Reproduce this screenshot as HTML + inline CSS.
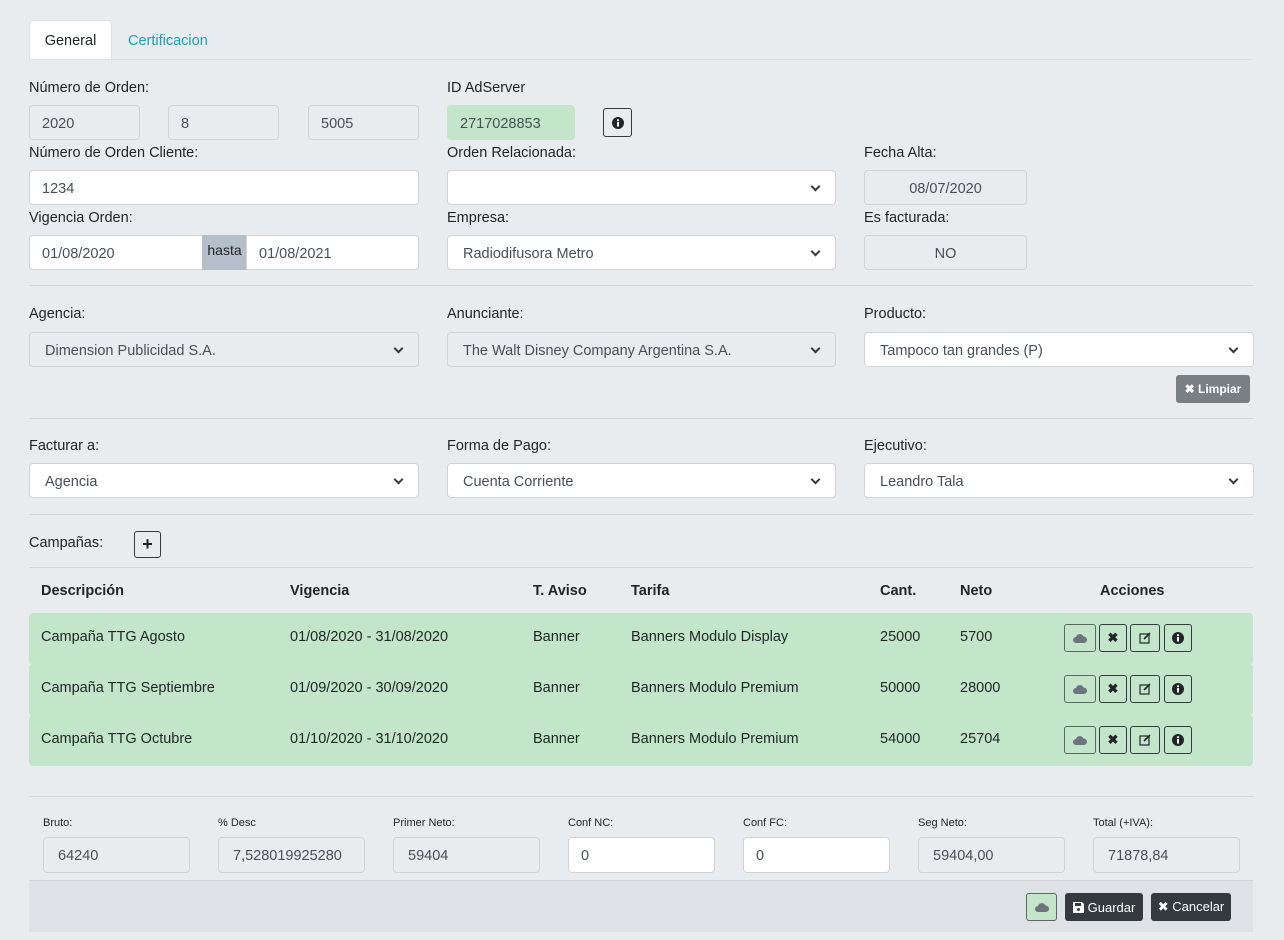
<!DOCTYPE html>
<html><head><meta charset="utf-8"><style>
*{box-sizing:border-box;margin:0;padding:0}
body{width:1284px;height:940px;background:#e9ecef;font-family:"Liberation Sans",sans-serif;color:#212529;font-size:14.5px;position:relative;overflow:hidden}
.a{position:absolute}
.lbl{position:absolute;font-size:14.5px;line-height:18px;top:0}
.in{position:absolute;height:35px;border:1px solid #ced4da;border-radius:4px;background:#fff;padding:0 12px;line-height:36px;font-size:14.5px;color:#495057}
.dis{background:#e9ecef}
.sel{padding-left:15px}
.sel::after{content:"";position:absolute;right:16px;top:12px;width:5px;height:5px;border-right:2px solid #343a40;border-bottom:2px solid #343a40;transform:rotate(45deg)}
.hr{position:absolute;left:29px;width:1224px;height:1px;background:#d3d7db}
.ib{position:absolute;width:29px;height:28px;border:1px solid #343a40;border-radius:3px;display:flex;align-items:center;justify-content:center}
.row{position:absolute;left:29px;width:1224px;height:50px;background:#c3e6cb;border-radius:4px}
.row span{position:absolute;top:16px;font-size:14.5px}
.th{position:absolute;top:583px;font-weight:bold;font-size:14.5px}
.sl{position:absolute;top:817px;font-size:11px;color:#212529}
.si{position:absolute;top:837px;width:147px;height:36px;border:1px solid #ced4da;border-radius:4px;background:#e9ecef;padding-left:14px;line-height:37px;font-size:14.5px;color:#495057}
.btn{position:absolute;height:28px;border-radius:3px;color:#fff;font-size:13px;display:flex;align-items:center;justify-content:center;gap:4px}
</style></head><body>
<div class="a" style="left:29px;top:20px;width:83px;height:40px;background:#fff;border:1px solid #dee2e6;border-bottom:none;border-radius:4px 4px 0 0;text-align:center;line-height:41px">General</div>
<div class="a" style="left:128px;top:21px;line-height:40px;color:#17a2b8">Certificacion</div>
<div class="hr" style="top:59px;background:#dee2e6"></div>

<div class="lbl" style="left:29px;top:79px">Número de Orden:</div>
<div class="lbl" style="left:447px;top:79px">ID AdServer</div>
<div class="in dis" style="left:29px;top:105px;width:111px">2020</div>
<div class="in dis" style="left:168px;top:105px;width:111px">8</div>
<div class="in dis" style="left:308px;top:105px;width:111px">5005</div>
<div class="in" style="left:447px;top:105px;width:128px;background:#c3e6cb;border-color:#c3e6cb">2717028853</div>
<div class="ib" style="left:603px;top:108px;height:29px"><svg width="12" height="12" viewBox="0 0 12 12"><circle cx="6" cy="6" r="6" fill="#212529"/><rect x="5" y="5" width="2" height="4.5" fill="#fff"/><circle cx="6" cy="3.2" r="1.1" fill="#fff"/></svg></div>

<div class="lbl" style="left:29px;top:144px">Número de Orden Cliente:</div>
<div class="lbl" style="left:447px;top:144px">Orden Relacionada:</div>
<div class="lbl" style="left:864px;top:144px">Fecha Alta:</div>
<div class="in" style="left:29px;top:170px;width:390px">1234</div>
<div class="in sel" style="left:447px;top:170px;width:389px"></div>
<div class="in dis" style="left:864px;top:170px;width:163px;text-align:center">08/07/2020</div>

<div class="lbl" style="left:29px;top:209px">Vigencia Orden:</div>
<div class="lbl" style="left:447px;top:209px">Empresa:</div>
<div class="lbl" style="left:864px;top:209px">Es facturada:</div>
<div class="in" style="left:29px;top:235px;width:174px;border-radius:4px 0 0 4px">01/08/2020</div>
<div class="a" style="left:202px;top:235px;width:45px;height:35px;background:#b4bfc9;text-align:center;line-height:31px;font-size:14px">hasta</div>
<div class="in" style="left:246px;top:235px;width:173px;border-radius:0 4px 4px 0">01/08/2021</div>
<div class="in sel" style="left:447px;top:235px;width:389px">Radiodifusora Metro</div>
<div class="in dis" style="left:864px;top:235px;width:163px;text-align:center">NO</div>

<div class="hr" style="top:285px"></div>
<div class="lbl" style="left:29px;top:305px">Agencia:</div>
<div class="lbl" style="left:447px;top:305px">Anunciante:</div>
<div class="lbl" style="left:864px;top:305px">Producto:</div>
<div class="in sel dis" style="left:29px;top:332px;width:390px">Dimension Publicidad S.A.</div>
<div class="in sel dis" style="left:447px;top:332px;width:389px">The Walt Disney Company Argentina S.A.</div>
<div class="in sel" style="left:864px;top:332px;width:390px">Tampoco tan grandes (P)</div>
<div class="btn" style="left:1176px;top:375px;width:74px;height:28px;background:#7a7f84;font-weight:bold;font-size:12px">✖ Limpiar</div>

<div class="hr" style="top:418px"></div>
<div class="lbl" style="left:29px;top:437px">Facturar a:</div>
<div class="lbl" style="left:447px;top:437px">Forma de Pago:</div>
<div class="lbl" style="left:864px;top:437px">Ejecutivo:</div>
<div class="in sel" style="left:29px;top:463px;width:390px">Agencia</div>
<div class="in sel" style="left:447px;top:463px;width:389px">Cuenta Corriente</div>
<div class="in sel" style="left:864px;top:463px;width:390px">Leandro Tala</div>

<div class="hr" style="top:514px"></div>
<div class="lbl" style="left:29px;top:534px">Campañas:</div>
<div class="ib" style="left:134px;top:531px;width:27px;height:27px;font-weight:bold;font-size:18px">+</div>
<div class="hr" style="top:567px"></div>

<div class="th" style="left:41px">Descripción</div>
<div class="th" style="left:290px">Vigencia</div>
<div class="th" style="left:533px">T. Aviso</div>
<div class="th" style="left:631px">Tarifa</div>
<div class="th" style="left:880px">Cant.</div>
<div class="th" style="left:960px">Neto</div>
<div class="th" style="left:1100px">Acciones</div>

<div class="row" style="top:613px;height:52px"><span style="left:12px">Campaña TTG Agosto</span><span style="left:261px">01/08/2020 - 31/08/2020</span><span style="left:504px">Banner</span><span style="left:602px">Banners Modulo Display</span><span style="left:851px">25000</span><span style="left:931px">5700</span></div>
<div class="row" style="top:664px;height:52px"><span style="left:12px">Campaña TTG Septiembre</span><span style="left:261px">01/09/2020 - 30/09/2020</span><span style="left:504px">Banner</span><span style="left:602px">Banners Modulo Premium</span><span style="left:851px">50000</span><span style="left:931px">28000</span></div>
<div class="row" style="top:715px;height:51px"><span style="left:12px">Campaña TTG Octubre</span><span style="left:261px">01/10/2020 - 31/10/2020</span><span style="left:504px">Banner</span><span style="left:602px">Banners Modulo Premium</span><span style="left:851px">54000</span><span style="left:931px">25704</span></div>

<div class="ib" style="left:1064px;top:624px;width:32px;border-color:#5a6b5e"><svg width="14" height="9" viewBox="0 0 14 9"><path d="M3 9a3 3 0 0 1 0-6 4 4 0 0 1 7.5-.5A3.2 3.2 0 0 1 11 9z" fill="#6c757d"/></svg></div>
<div class="ib" style="left:1099px;top:624px;width:28px;font-weight:bold;font-size:13px">✖</div>
<div class="ib" style="left:1130px;top:624px;width:30px"><svg width="12" height="12" viewBox="0 0 12 12"><rect x="1" y="2" width="9" height="9" fill="none" stroke="#212529" stroke-width="1.2"/><path d="M5 7l6-6" stroke="#212529" stroke-width="1.6"/></svg></div>
<div class="ib" style="left:1164px;top:624px;width:28px"><svg width="12" height="12" viewBox="0 0 12 12"><circle cx="6" cy="6" r="6" fill="#212529"/><rect x="5" y="5" width="2" height="4.5" fill="#fff"/><circle cx="6" cy="3.2" r="1.1" fill="#fff"/></svg></div>

<div class="ib" style="left:1064px;top:675px;width:32px;border-color:#5a6b5e"><svg width="14" height="9" viewBox="0 0 14 9"><path d="M3 9a3 3 0 0 1 0-6 4 4 0 0 1 7.5-.5A3.2 3.2 0 0 1 11 9z" fill="#6c757d"/></svg></div>
<div class="ib" style="left:1099px;top:675px;width:28px;font-weight:bold;font-size:13px">✖</div>
<div class="ib" style="left:1130px;top:675px;width:30px"><svg width="12" height="12" viewBox="0 0 12 12"><rect x="1" y="2" width="9" height="9" fill="none" stroke="#212529" stroke-width="1.2"/><path d="M5 7l6-6" stroke="#212529" stroke-width="1.6"/></svg></div>
<div class="ib" style="left:1164px;top:675px;width:28px"><svg width="12" height="12" viewBox="0 0 12 12"><circle cx="6" cy="6" r="6" fill="#212529"/><rect x="5" y="5" width="2" height="4.5" fill="#fff"/><circle cx="6" cy="3.2" r="1.1" fill="#fff"/></svg></div>

<div class="ib" style="left:1064px;top:726px;width:32px;border-color:#5a6b5e"><svg width="14" height="9" viewBox="0 0 14 9"><path d="M3 9a3 3 0 0 1 0-6 4 4 0 0 1 7.5-.5A3.2 3.2 0 0 1 11 9z" fill="#6c757d"/></svg></div>
<div class="ib" style="left:1099px;top:726px;width:28px;font-weight:bold;font-size:13px">✖</div>
<div class="ib" style="left:1130px;top:726px;width:30px"><svg width="12" height="12" viewBox="0 0 12 12"><rect x="1" y="2" width="9" height="9" fill="none" stroke="#212529" stroke-width="1.2"/><path d="M5 7l6-6" stroke="#212529" stroke-width="1.6"/></svg></div>
<div class="ib" style="left:1164px;top:726px;width:28px"><svg width="12" height="12" viewBox="0 0 12 12"><circle cx="6" cy="6" r="6" fill="#212529"/><rect x="5" y="5" width="2" height="4.5" fill="#fff"/><circle cx="6" cy="3.2" r="1.1" fill="#fff"/></svg></div>

<div class="hr" style="top:796px"></div>
<div class="sl" style="left:43px">Bruto:</div>
<div class="sl" style="left:218px">% Desc</div>
<div class="sl" style="left:393px">Primer Neto:</div>
<div class="sl" style="left:568px">Conf NC:</div>
<div class="sl" style="left:743px">Conf FC:</div>
<div class="sl" style="left:918px">Seg Neto:</div>
<div class="sl" style="left:1093px">Total (+IVA):</div>
<div class="si" style="left:43px">64240</div>
<div class="si" style="left:218px">7,528019925280</div>
<div class="si" style="left:393px">59404</div>
<div class="si" style="left:568px;background:#fff;padding-left:12px">0</div>
<div class="si" style="left:743px;background:#fff;padding-left:12px">0</div>
<div class="si" style="left:918px">59404,00</div>
<div class="si" style="left:1093px">71878,84</div>

<div class="a" style="left:29px;top:880px;width:1224px;height:52px;background:#dee2e6;border-top:1px solid #ced4da"></div>
<div class="btn" style="left:1026px;top:893px;width:31px;background:#c3e6cb;border:1px solid #5a6b5e"><svg width="14" height="9" viewBox="0 0 14 9"><path d="M3 9a3 3 0 0 1 0-6 4 4 0 0 1 7.5-.5A3.2 3.2 0 0 1 11 9z" fill="#6c757d"/></svg></div>
<div class="btn" style="left:1065px;top:893px;width:78px;background:#343a40"><svg width="11" height="11" viewBox="0 0 11 11"><path d="M0 0h9l2 2v9H0z" fill="#fff"/><rect x="2" y="1" width="6" height="3" fill="#343a40"/><circle cx="5.5" cy="7.5" r="1.5" fill="#343a40"/></svg>Guardar</div>
<div class="btn" style="left:1151px;top:893px;width:80px;background:#343a40">✖ Cancelar</div>
</body></html>
